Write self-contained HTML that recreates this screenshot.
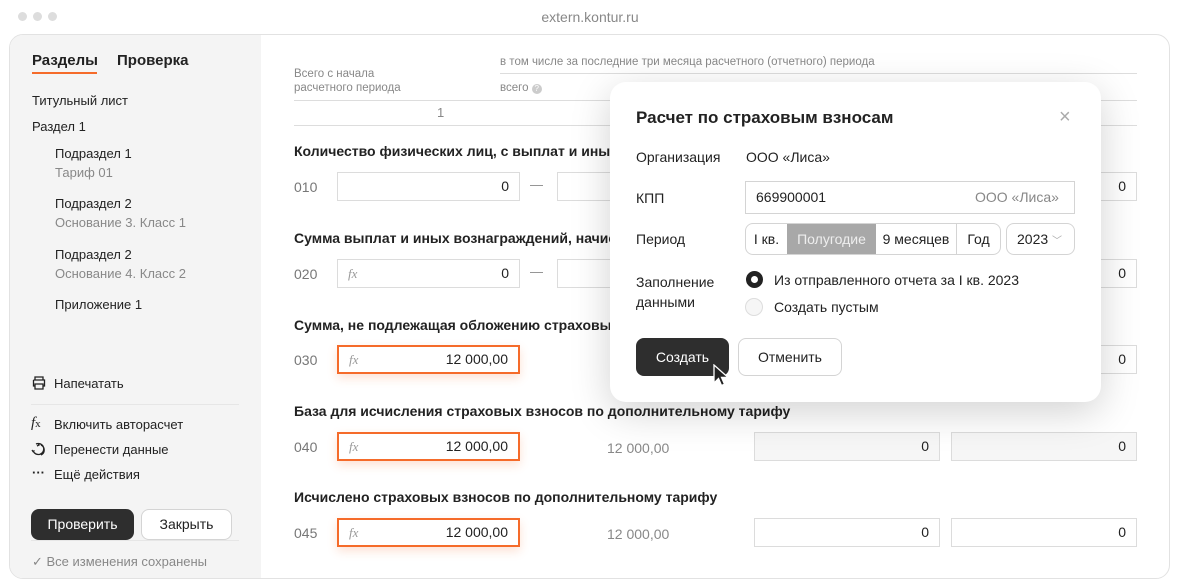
<!DOCTYPE html>
<html><head><meta charset="utf-8"><style>
*{box-sizing:border-box;margin:0;padding:0}
body{width:1180px;height:588px;background:#fff;font-family:"Liberation Sans",sans-serif;color:#222;position:relative;overflow:hidden;font-size:13px}
.a{position:absolute;white-space:nowrap}
.frame{position:absolute;left:9px;top:34px;width:1161px;height:545px;border:1px solid #e2e2e2;border-radius:14px;overflow:hidden;background:#fff}
.side{position:absolute;left:0;top:0;width:251px;height:100%;background:#f4f4f4}
.g{color:#888}
.inp{position:absolute;height:29px;border:1px solid #dcdcdc;background:#fff;text-align:right;padding-right:10px;line-height:27px;font-size:14px}
.inp.d{background:#f6f6f6}
.inp.o{border:2px solid #f56b2a;line-height:25px;box-shadow:0 4px 10px rgba(245,107,42,.2)}
.fx{position:absolute;left:10px;font-family:"Liberation Serif",serif;font-style:italic;color:#999;font-size:13px}
.h{font-size:14px;font-weight:bold;color:#222}
.code{font-size:14px;color:#777}
.line{position:absolute;height:1px;background:#ddd}
</style></head><body>
<div class="a" style="left:18px;top:12px;width:9px;height:9px;border-radius:50%;background:#ddd"></div>
<div class="a" style="left:33px;top:12px;width:9px;height:9px;border-radius:50%;background:#ddd"></div>
<div class="a" style="left:48px;top:12px;width:9px;height:9px;border-radius:50%;background:#ddd"></div>
<div class="a" style="left:0;width:1180px;top:9px;text-align:center;color:#888;font-size:14px">extern.kontur.ru</div>

<div class="frame">
<div class="side"></div>
</div>
<div class="a" style="left:32px;top:52px;font-size:15px;font-weight:bold">Разделы</div>
<div class="a" style="left:32px;top:72px;width:65px;height:2px;background:#f56b2a"></div>
<div class="a" style="left:117px;top:52px;font-size:15px;font-weight:bold">Проверка</div>
<div class="a" style="left:32px;top:93px">Титульный лист</div>
<div class="a" style="left:32px;top:119px">Раздел 1</div>
<div class="a" style="left:55px;top:146px">Подраздел 1</div>
<div class="a g" style="left:55px;top:165px">Тариф 01</div>
<div class="a" style="left:55px;top:196px">Подраздел 2</div>
<div class="a g" style="left:55px;top:215px">Основание 3. Класс 1</div>
<div class="a" style="left:55px;top:247px">Подраздел 2</div>
<div class="a g" style="left:55px;top:266px">Основание 4. Класс 2</div>
<div class="a" style="left:55px;top:297px">Приложение 1</div>

<svg class="a" style="left:31px;top:375px" width="16" height="16" viewBox="0 0 16 16" fill="none" stroke="#222" stroke-width="1.3"><path d="M4 5V2h8v3M2.5 5h11v6H12M4 11H2.5V5M4 9h8v5H4z"/></svg>
<div class="a" style="left:54px;top:376px">Напечатать</div>
<div class="line" style="left:31px;top:404px;width:208px;background:#e6e6e6"></div>
<div class="a" style="left:31px;top:415px;font-family:'Liberation Serif',serif;font-style:italic;font-size:15px">f<span style="font-size:11px;font-style:normal">x</span></div>
<div class="a" style="left:54px;top:417px">Включить авторасчет</div>
<svg class="a" style="left:30px;top:441px" width="17" height="17" viewBox="0 0 17 17" fill="none" stroke="#222" stroke-width="1.3"><path d="M6 3a5.5 5.5 0 1 1-3 6.5M2 9l1 1.5 1.5-1M11 14a5.5 5.5 0 0 0 0-10M7 5l2 -1-1-1.5"/></svg>
<div class="a" style="left:54px;top:442px">Перенести данные</div>
<div class="a" style="left:32px;top:465px;font-weight:bold">···</div>
<div class="a" style="left:54px;top:467px">Ещё действия</div>
<div class="a" style="left:31px;top:509px;width:103px;height:31px;border-radius:8px;background:#2e2e2e;color:#fff;text-align:center;line-height:31px;font-size:14px">Проверить</div>
<div class="a" style="left:141px;top:509px;width:91px;height:31px;border-radius:8px;border:1px solid #d4d4d4;background:#fff;text-align:center;line-height:29px;font-size:14px">Закрыть</div>
<div class="line" style="left:31px;top:540px;width:208px;background:#e6e6e6"></div>
<div class="a g" style="left:32px;top:554px">✓ Все изменения сохранены</div>

<div class="a g" style="left:294px;top:67px;font-size:11.5px;line-height:14px">Всего с начала<br>расчетного периода</div>
<div class="a g" style="left:500px;top:56px;font-size:11.5px">в том числе за последние три месяца расчетного (отчетного) периода</div>
<div class="line" style="left:500px;top:73px;width:637px"></div>
<div class="a g" style="left:500px;top:82px;font-size:11.5px">всего <span style="display:inline-block;width:10px;height:10px;border-radius:50%;background:#ccc;color:#fff;font-size:8px;text-align:center;line-height:10px">?</span></div>
<div class="line" style="left:294px;top:100px;width:843px"></div>
<div class="a g" style="left:437px;top:105px;font-size:13px">1</div>
<div class="line" style="left:294px;top:125px;width:843px"></div>

<div class="a h" style="left:294px;top:143px">Количество физических лиц, с выплат и иных</div>
<div class="a code" style="left:294px;top:179px">010</div>
<div class="inp" style="left:337px;top:172px;width:183px">0</div>
<div class="a g" style="left:530px;top:177px">—</div>
<div class="inp" style="left:557px;top:172px;width:60px"></div>
<div class="inp" style="left:1090px;top:172px;width:47px">0</div>

<div class="a h" style="left:294px;top:230px">Сумма выплат и иных вознаграждений, начисл</div>
<div class="a code" style="left:294px;top:266px">020</div>
<div class="inp" style="left:337px;top:259px;width:183px"><span class="fx">fx</span>0</div>
<div class="a g" style="left:530px;top:264px">—</div>
<div class="inp" style="left:557px;top:259px;width:60px"></div>
<div class="inp" style="left:1090px;top:259px;width:47px">0</div>

<div class="a h" style="left:294px;top:317px">Сумма, не подлежащая обложению страховым</div>
<div class="a code" style="left:294px;top:352px">030</div>
<div class="inp o" style="left:337px;top:345px;width:183px"><span class="fx">fx</span>12 000,00</div>
<div class="inp" style="left:1090px;top:345px;width:47px">0</div>

<div class="a h" style="left:294px;top:403px">База для исчисления страховых взносов по дополнительному тарифу</div>
<div class="a code" style="left:294px;top:439px">040</div>
<div class="inp o" style="left:337px;top:432px;width:183px"><span class="fx">fx</span>12 000,00</div>
<div class="a g" style="left:607px;top:440px;font-size:14px">12 000,00</div>
<div class="inp d" style="left:754px;top:432px;width:186px">0</div>
<div class="inp d" style="left:951px;top:432px;width:186px">0</div>

<div class="a h" style="left:294px;top:489px">Исчислено страховых взносов по дополнительному тарифу</div>
<div class="a code" style="left:294px;top:525px">045</div>
<div class="inp o" style="left:337px;top:518px;width:183px"><span class="fx">fx</span>12 000,00</div>
<div class="a g" style="left:607px;top:526px;font-size:14px">12 000,00</div>
<div class="inp" style="left:754px;top:518px;width:186px">0</div>
<div class="inp" style="left:951px;top:518px;width:186px">0</div>

<div class="a" style="left:610px;top:82px;width:491px;height:320px;background:#fff;border-radius:16px;box-shadow:0 10px 40px rgba(0,0,0,.18)"></div>
<div class="a" style="left:636px;top:108px;font-size:17px;font-weight:bold">Расчет по страховым взносам</div>
<div class="a" style="left:1059px;top:106px;font-size:20px;color:#aaa">×</div>
<div class="a" style="left:636px;top:149px;font-size:14px">Организация</div>
<div class="a" style="left:746px;top:149px;font-size:14px">ООО «Лиса»</div>
<div class="a" style="left:636px;top:190px;font-size:14px">КПП</div>
<div class="a" style="left:745px;top:181px;width:330px;height:33px;border:1px solid #d4d4d4"></div>
<div class="a" style="left:756px;top:189px;font-size:14px">669900001</div>
<div class="a g" style="left:975px;top:189px;font-size:14px">ООО «Лиса»</div>
<div class="a" style="left:636px;top:231px;font-size:14px">Период</div>
<div class="a" style="left:745px;top:223px;width:256px;height:32px;border:1px solid #d4d4d4;border-radius:8px;overflow:hidden;font-size:14px;display:flex;line-height:30px">
<div style="width:41px;text-align:center">I кв.</div>
<div style="width:89px;text-align:center;background:#a8a8a8;color:#eee">Полугодие</div>
<div style="width:81px;text-align:center;border-right:1px solid #d4d4d4">9 месяцев</div>
<div style="flex:1;text-align:center">Год</div></div>
<div class="a" style="left:1006px;top:223px;width:69px;height:32px;border:1px solid #d4d4d4;border-radius:8px;font-size:14px;line-height:30px;padding-left:10px">2023 <span style="color:#aaa;font-size:10px">﹀</span></div>
<div class="a" style="left:636px;top:272px;font-size:14px;line-height:20px">Заполнение<br>данными</div>
<div class="a" style="left:746px;top:271px;width:17px;height:17px;border-radius:50%;border:5px solid #222"></div>
<div class="a" style="left:774px;top:272px;font-size:14px">Из отправленного отчета за I кв. 2023</div>
<div class="a" style="left:745px;top:298px;width:18px;height:18px;border-radius:50%;border:1px solid #ddd;background:#f6f6f6"></div>
<div class="a" style="left:774px;top:299px;font-size:14px">Создать пустым</div>
<div class="a" style="left:636px;top:338px;width:93px;height:38px;border-radius:8px;background:#2e2e2e;color:#fff;font-size:14px;line-height:38px;text-align:center">Создать</div>
<div class="a" style="left:738px;top:338px;width:104px;height:38px;border-radius:8px;border:1px solid #d4d4d4;font-size:14px;line-height:36px;text-align:center">Отменить</div>
<svg class="a" style="left:713px;top:364px" width="18" height="24" viewBox="0 0 18 24"><path d="M1 1v18l4.5-4.5 3 7 3-1.3-3-6.8H15z" fill="#222" stroke="#fff" stroke-width="1.3"/></svg>
</body></html>
